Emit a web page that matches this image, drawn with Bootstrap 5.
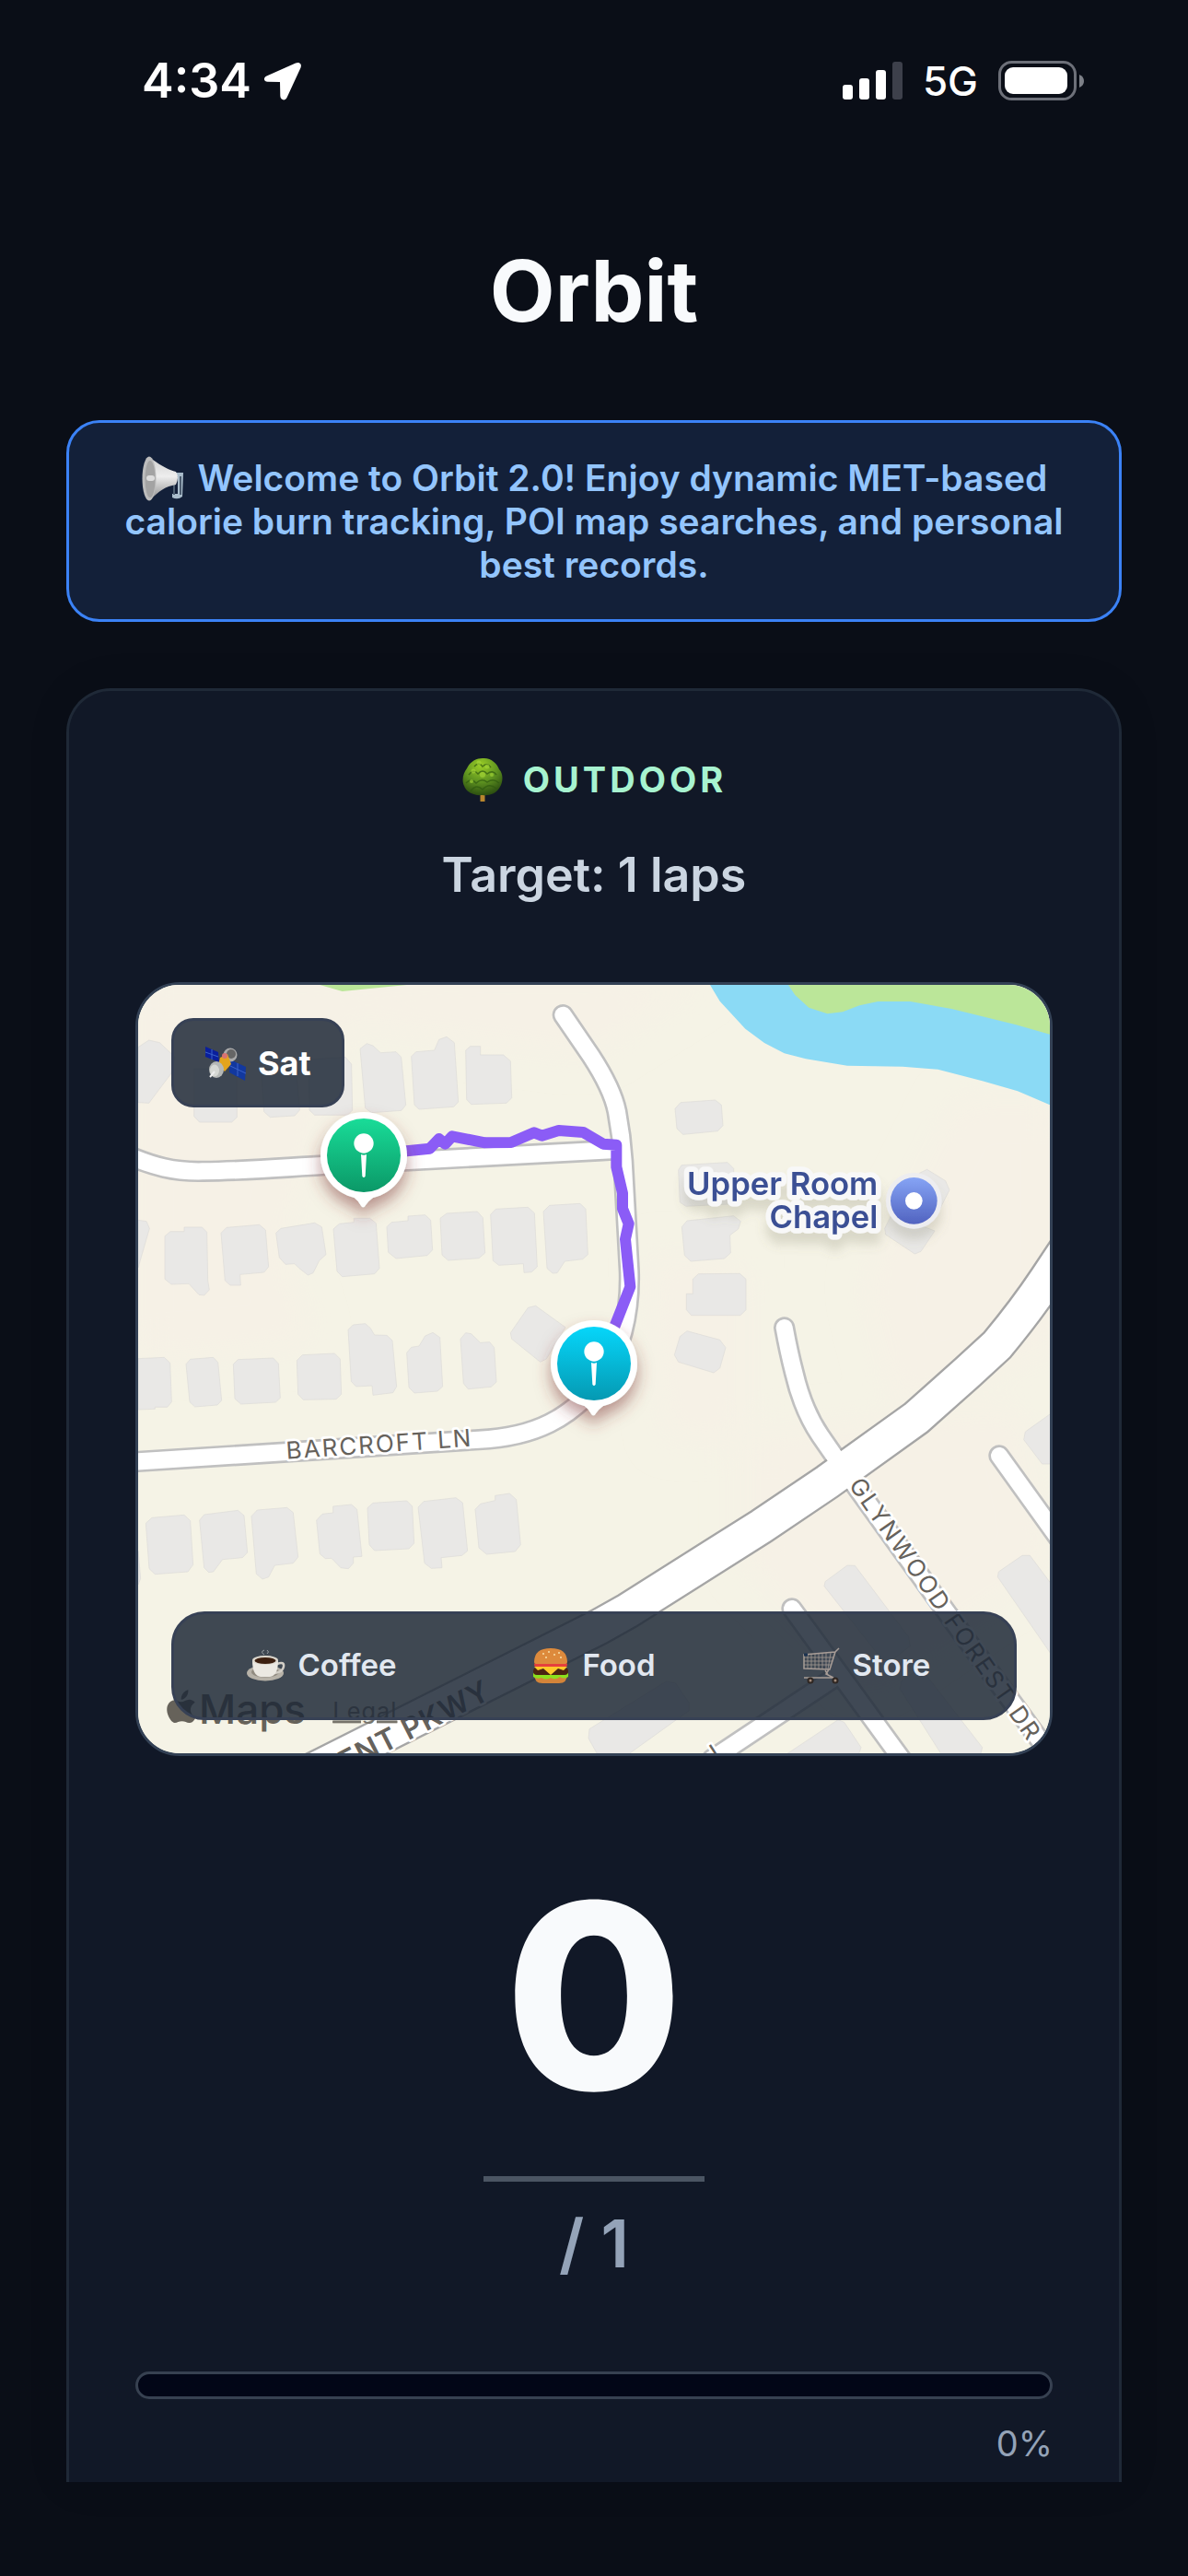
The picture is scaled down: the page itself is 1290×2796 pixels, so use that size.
<!DOCTYPE html>
<html lang="en">
<head>
<meta charset="utf-8">
<meta name="viewport" content="width=device-width, initial-scale=1">
<title>Orbit</title>
<link href="https://cdn.jsdelivr.net/npm/bootstrap@5.3.0/dist/css/bootstrap.min.css" rel="stylesheet">
<style>
  body { background: #0a0e17; color: #f8fafc; font-family: Inter, "Liberation Sans", sans-serif; }
  .status-bar { height: 176px; padding: 0 113px 0 154px; color: #fff; }
  .status-time { font-size: 52px; line-height: 64px; font-weight: 600; }
  .status-clock { gap: 12px; }
  .status-icons { gap: 22px; }
  .status-net { font-size: 44px; line-height: 64px; font-weight: 500; }
  .app-main { padding: 84px 72px 0; }
  .app-title { font-size: 92px; line-height: 112px; font-weight: 700; margin: 0 0 84px; }
  .notice { border: 3px solid #3b82f6; border-radius: 36px; background: #132039; color: #93c5fd; font-size: 39px; line-height: 47px; font-weight: 600; padding: 36px; margin-bottom: 72px; }
  .notice svg { vertical-align: -4px; margin: -8px 4px -8px 0; }
  .lap-card { border: 3px solid #1f2937; border-bottom: 0; border-radius: 48px 48px 0 0; background: #111827; padding: 72px 72px 0; box-shadow: 0 0 48px rgba(0,0,0,.08); }
  .mode { color: #a7f3d0; font-size: 38px; line-height: 48px; font-weight: 700; letter-spacing: 4px; gap: 21px; margin-bottom: 48px; }
  .target { color: #cbd5e1; font-size: 52px; line-height: 64px; font-weight: 600; margin-bottom: 84px; }
  .map-box { height: 840px; border: 3px solid #334155; border-radius: 48px; background: #f5f3e6; }
  .map-overlay { background: rgba(31,41,55,.85); border: 3px solid #374155; }
  .sat-btn { top: 36px; left: 36px; height: 97px; padding: 0 33px; border-radius: 24px; color: #fff; font-size: 36px; font-weight: 700; gap: 12px; }
  .poi-bar { left: 36px; right: 36px; bottom: 36px; height: 118px; border-radius: 36px; padding: 0 12px; }
  .poi-btn { flex: 1 1 0; height: 88px; border: 0; background: none; color: #e2e8f0; font-size: 33px; font-weight: 600; gap: 14px; padding: 0; }
  .lap-count { font-size: 280px; line-height: 282px; font-weight: 800; margin-top: 120px; }
  .lap-rule { width: 240px; height: 6px; background: #4b5563; opacity: 1; border: 0; margin: 54px auto 24px; }
  .lap-total { color: #94a3b8; font-size: 72px; line-height: 86px; font-weight: 600; margin-bottom: 96px; }
  .lap-progress { height: 30px; border: 3px solid #374151; border-radius: 15px; background: #020617; --bs-progress-bar-bg: #3b82f6; }
  .lap-percent { color: #94a3b8; font-size: 38px; line-height: 48px; margin-top: 24px; }
  .home-area { height: 102px; }
  .road-name { fill: #66625c; stroke: #fff; stroke-width: 16px; stroke-linejoin: round; paint-order: stroke; font-size: 78px; letter-spacing: 6px; }
  .parkway-name { font-size: 96px; font-weight: 600; letter-spacing: 3px; }
</style>
</head>
<body>
<div class="d-flex flex-column min-vh-100">

  <header class="status-bar d-flex align-items-center justify-content-between">
    <div class="status-clock d-flex align-items-center">
      <span class="status-time">4:34</span>
      <svg width="44" height="44" viewBox="0 0 44 44" aria-hidden="true"><path d="M36 2.500 4.500 16.500C.5 18.500 1.500 22.700 5.500 22.800L19 23 19.300 38C19.500 43 24.800 43.800 26.500 40L41.500 7.500C43.200 3.500 40 .8 36 2.500Z" fill="#fff"/></svg>
    </div>
    <div class="status-icons d-flex align-items-center">
      <svg width="65" height="42" viewBox="0 0 65 42" aria-hidden="true" fill="#fff"><rect y="25" width="11" height="16" rx="3"/><rect x="18" y="18" width="11" height="23" rx="3"/><rect x="36" y="9" width="11" height="32" rx="3"/><rect x="54" width="11" height="41" rx="3" fill="#3d404b"/></svg>
      <span class="status-net">5G</span>
      <svg width="93" height="44" viewBox="0 0 93 44" aria-hidden="true"><rect x="1.500" y="1.500" width="82" height="40" rx="13" fill="none" stroke="#6d7079" stroke-width="3"/><rect x="7" y="7" width="68" height="29" rx="9" fill="#fff"/><path d="M88 15Q93 17 93 22T88 29Z" fill="#7d8088"/></svg>
    </div>
  </header>

  <main class="app-main d-flex flex-column flex-grow-1">
    <h1 class="app-title text-center">Orbit</h1>

    <div class="notice text-center" role="status">
      <svg width="48" height="50" viewBox="0 0 48 50" aria-hidden="true">
        <defs><linearGradient id="horn" x1="0" y1="0" x2="0" y2="1"><stop offset="0" stop-color="#cfcfcf"/><stop offset=".45" stop-color="#eee"/><stop offset="1" stop-color="#8c8c8c"/></linearGradient></defs>
        <path d="M36 18 46 18 45 44Q40 48 34 45V41H40V22L36 24Z" fill="#a9bccb"/><path d="M36 24V42M43 22V42" stroke="#4c5d70" stroke-width="2"/>
        <path d="M9 1C16 6 26 14 38 17Q42 23 38 31C27 33 19 38 10 48Z" fill="url(#horn)"/>
        <ellipse cx="9" cy="24.500" rx="7.500" ry="24" fill="#bdbdbd"/><ellipse cx="10" cy="25" rx="5.500" ry="20" fill="#a3a3a3"/><rect x="6" y="21" width="9" height="6" rx="3" fill="#ddd"/>
      </svg>
      Welcome to Orbit 2.0! Enjoy dynamic MET-based calorie burn tracking, POI map searches, and personal best records.
    </div>

    <section class="lap-card flex-grow-1">
      <div class="mode d-flex justify-content-center align-items-center">
        <svg width="46" height="48" viewBox="0 0 46 48" aria-hidden="true">
          <defs><radialGradient id="leaf" cx=".45" cy=".2" r=".85"><stop offset="0" stop-color="#9bce27"/><stop offset=".5" stop-color="#5f9420"/><stop offset="1" stop-color="#26460f"/></radialGradient></defs>
          <rect x="20.500" y="38" width="5" height="10" fill="#b8862e"/>
          <path d="M23 1C32 0 39 7 41 13 46 18 45 27 42 32 38 40 29 42 23 41 15 42 5 38 3 31 0 25 2 17 6 12 9 5 16 1 23 1Z" fill="url(#leaf)"/>
          <g fill="none" stroke="#2f5a10" stroke-width="1.500" opacity=".7"><path d="M14 10q5-6 9 0q5-5 9 1M8 19q5-7 10-1q5-6 10 0q6-5 10 1M5 28q6-6 11 0q6-6 12-1q7-5 13 1M10 37q6-9 13-2q7-8 15-1"/></g>
          <g fill="#a6d838" opacity=".6"><circle cx="19" cy="6" r="2.500"/><circle cx="28" cy="10" r="2.500"/><circle cx="13" cy="15" r="2.500"/><circle cx="23" cy="19" r="3"/><circle cx="33" cy="19" r="2"/><circle cx="11" cy="26" r="2"/></g>
        </svg>
        <span>OUTDOOR</span>
      </div>
      <div class="target text-center">Target: 1 laps</div>

      <div class="map-box position-relative overflow-hidden">
        <svg class="position-absolute top-0 start-0 w-100 h-100" viewBox="30 27 2970 2502" preserveAspectRatio="xMidYMid slice" role="img" aria-label="Map of the walked route">
          <defs>
            <filter id="soft" x="-30%" y="-30%" width="160%" height="160%"><feGaussianBlur stdDeviation="60"/></filter>
            <filter id="pinShadow" x="-50%" y="-50%" width="200%" height="200%"><feDropShadow dx="0" dy="30" stdDeviation="26" flood-color="#7a3030" flood-opacity=".5"/></filter>
            <filter id="labelShadow" x="-20%" y="-30%" width="140%" height="180%"><feDropShadow dx="0" dy="36" stdDeviation="18" flood-color="#77745a" flood-opacity=".22"/></filter>
            <linearGradient id="pinGreen" x1="0" y1="0" x2="0" y2="1"><stop offset="0" stop-color="#19dc98"/><stop offset="1" stop-color="#0b9867"/></linearGradient>
            <linearGradient id="pinCyan" x1="0" y1="0" x2="0" y2="1"><stop offset="0" stop-color="#06d6fa"/><stop offset="1" stop-color="#0599b2"/></linearGradient>
            <linearGradient id="poi" x1="0" y1="0" x2="0" y2="1"><stop offset="0" stop-color="#86a4f5"/><stop offset="1" stop-color="#5163c0"/></linearGradient>
            <g id="pinShape" fill="#fff"><path d="M-60 122Q-25 135-12 160Q-2 178 8 160Q25 135 60 122Z"/><circle r="141"/></g>
            <g id="pinGlyph" fill="#fff"><circle cy="-39" r="32"/><path d="M-9-3Q0 2 9-3L5 68Q0 76-5 68Z"/></g>
            <g id="streets" fill="none" stroke-linecap="round" stroke-linejoin="round">
              <path d="M-20 575C80 620 150 636 240 634C400 632 500 622 640 614L1530 567L1600 563"/>
              <path d="M1414 125L1505 258Q1575 365 1590 440Q1605 520 1610 600L1630 960C1634 1100 1600 1230 1540 1310C1440 1440 1320 1500 1140 1508L0 1581"/>
              <path d="M2135 1143Q2150 1225 2167 1290Q2195 1410 2252 1495L2325 1600L2660 2065L3010 2545"/>
              <path d="M2835 1560L3040 1845"/>
              <path d="M2160 2058L2520 2552"/>
              <path d="M1900 2548L2315 2272"/>
            </g>
            <path id="parkway" d="M600 2585L1530 2118L1625 2065L2060 1790L2275 1645L2565 1437L2730 1290L2828 1200Q2920 1090 2990 985L3060 880" fill="none"/>
          </defs>
          <rect x="0" y="0" width="3030" height="2560" fill="#f5f3e6"/>
          <g fill="#f6f1e6" filter="url(#soft)"><path d="M0 0H1900L1500 250 700 150 500 900 600 1200 0 1250Z"/><path d="M2700 400H3050V1200L2500 1400 2400 1000Z"/><path d="M1700 900 2000 950 2000 1500 1750 1500Z"/><path d="M2000 1500 2900 1400 3000 1900 2400 2300 2000 1900Z"/></g>
          <path d="M622 27L695 48L905 27Z" fill="#bbe699"/>
          <path d="M2100 20H3010V200H2200Z" fill="#bbe699"/>
          <path d="M1893 27L1925 80L2008 170L2070 216L2135 250L2205 268L2340 290L2520 293L2635 302L2780 340L2895 373L3000 418V188L2890 157L2680 105L2545 81L2440 81L2380 94L2325 115L2275 121L2215 101L2170 60L2148 27Z" fill="#8bdaf5"/>
          <!-- houses -->
          <g fill="#e9e8e6" stroke="#dcdbd8" stroke-width="2" stroke-linejoin="round">
            <path d="M30 230L65 207L100 215L150 262L138 315L65 412L30 410Z"/>
            <path d="M212 300H352V458L335 474H230L212 455Z"/>
            <path d="M430 300H545L556 435L540 453L460 458L440 440Z"/>
            <path d="M585 270L705 262L725 285L728 435L712 451H605L588 435Z"/>
            <path d="M753 235L775 218L795 225L820 248L870 245L887 262L902 418L888 436L790 443L770 428Z"/>
            <path d="M920 260L935 245L995 240L1010 205L1035 196L1060 215L1073 408L1058 424L945 432L930 418Z"/>
            <path d="M1097 240L1112 227H1145V255H1220L1243 275L1247 395L1230 412L1115 416L1100 400Z"/>
            <path d="M30 793L57 797L67 820L30 948Z"/>
            <path d="M117 845L135 830H180V816H238L254 832L257 990L262 1020L245 1038L228 1036L195 1000L138 1002L117 985Z"/>
            <path d="M300 835L318 817L425 808L445 825L455 945L440 963L362 970L364 1005H330L313 990Z"/>
            <path d="M479 835L495 820L605 802L628 815L642 905L620 925L600 965L583 972L555 950L540 935L510 937L490 915Z"/>
            <path d="M666 822L685 805L733 800V787H785L805 803L816 950L800 968L695 977L678 960Z"/>
            <path d="M840 815L855 800L909 795V780L965 776L983 793L989 890L972 908L870 918L845 898Z"/>
            <path d="M1014 787L1035 771L1135 765L1153 785L1160 900L1140 917L1040 924L1020 907Z"/>
            <path d="M1178 775L1195 757L1300 751L1321 770L1330 945L1312 962L1287 964L1285 935L1205 940L1186 925Z"/>
            <path d="M1350 765L1370 745L1470 739L1488 757L1495 905L1478 920L1420 927L1395 965L1380 966L1362 950Z"/>
            <path d="M1325 1072L1422 1142L1360 1245L1340 1255L1247 1180L1243 1160L1300 1078Z"/>
            <path d="M30 1244L115 1240L134 1258L139 1385L125 1402H85V1408L30 1410Z"/>
            <path d="M186 1262L200 1246L275 1240L290 1256L302 1380L288 1395L215 1401L198 1385Z"/>
            <path d="M340 1262L355 1247L470 1242L487 1260L493 1372L478 1386L365 1392L345 1375Z"/>
            <path d="M547 1250L565 1232L670 1227L688 1245L692 1360L675 1376L568 1378L551 1360Z"/>
            <path d="M714 1150L730 1134L770 1130L787 1145L800 1167L840 1168L858 1185L872 1335L860 1355L795 1363L792 1332L740 1335L724 1318Z"/>
            <path d="M905 1225L920 1207L945 1203L965 1170L990 1159L1013 1175L1022 1335L1005 1350L930 1356L912 1338Z"/>
            <path d="M1080 1180L1097 1160L1115 1163L1145 1192L1175 1190L1190 1208L1197 1320L1180 1336L1105 1343L1090 1325Z"/>
            <path d="M30 1870L38 1960L30 1980Z"/>
            <path d="M55 1780L75 1762L180 1753L200 1772L209 1915L192 1938L85 1946L66 1928Z"/>
            <path d="M230 1770L245 1752L355 1738L375 1755L386 1875L370 1892L305 1898L275 1938L260 1940L245 1925Z"/>
            <path d="M399 1757L418 1737L515 1729L535 1745L551 1890L535 1910L475 1917L455 1955L435 1962L415 1945Z"/>
            <path d="M611 1770L630 1750L665 1746V1725L725 1719L743 1735L759 1888L731 1890V1910L715 1928L690 1925L660 1894L640 1895L622 1880Z"/>
            <path d="M777 1730L795 1714L905 1707L923 1725L929 1845L912 1863L800 1869L783 1850Z"/>
            <path d="M942 1728L960 1709L1065 1697L1087 1713L1103 1870L1085 1885L1017 1892L1020 1925L985 1927L963 1910Z"/>
            <path d="M1128 1735L1145 1717L1193 1706V1690L1240 1683L1262 1703L1276 1850L1258 1872L1165 1881L1140 1860Z"/>
            <path d="M1779 430L1797 410L1910 402L1930 418L1935 485L1918 503L1805 514L1785 495Z"/>
            <path d="M1790 630L1800 614L1950 605L1970 625V740L1815 748L1795 735Z"/>
            <path d="M1801 815L1818 795L1970 779L1993 797L1985 822L1958 842L1960 900L1940 918L1830 927L1810 908Z"/>
            <path d="M1837 985L1855 968L1990 967L2010 985V1085L1992 1103H1832L1816 1085V1033H1837Z"/>
            <path d="M1795 1172L1818 1154L1925 1183L1944 1208L1925 1275L1905 1290L1790 1255L1777 1232Z"/>
            <path d="M2575 640L2600 628L2660 665L2673 695L2640 760L2570 720Z"/>
            <path d="M2485 775L2625 828L2580 895L2560 903L2465 840L2462 820Z"/>
            <path d="M3010 1418L2920 1482L2915 1508L2975 1587H3010Z"/>
            <path d="M2265 1985L2268 1970L2340 1917L2365 1918L2540 2150L2545 2180L2480 2230L2450 2220Z"/>
            <path d="M2830 1955L2833 1938L2910 1885L2935 1885L3010 1985V2215Z"/>
            <path d="M1500 2450L1750 2295L1780 2300L1825 2365V2390L1630 2530H1525L1497 2480Z"/>
            <path d="M2145 2530L2310 2420L2330 2428L2385 2510L2378 2530Z"/>
            <path d="M2512 2320L2515 2295L2565 2260L2590 2265L2780 2510L2775 2530H2645Z"/>
          </g>
          <!-- roads: casings first, then surfaces, so that junctions stay open -->
          <use href="#streets" stroke="#c0c0c0" stroke-width="70"/>
          <use href="#parkway" stroke="#a5a5a5" stroke-width="124"/>
          <use href="#streets" stroke="#fff" stroke-width="54"/>
          <use href="#parkway" stroke="#fff" stroke-width="110"/>
          <!-- walked route -->
          <path d="M765 582L905 568L980 560L1010 528L1030 545L1053 520L1160 541L1245 540L1320 508L1345 518L1400 501L1480 507L1545 545L1588 548V620L1608 705V755L1628 805L1617 855L1633 1010L1570 1170" fill="none" stroke="#8b5cf6" stroke-width="36" stroke-linejoin="round"/>
          <!-- labels -->
          <text class="road-name" transform="translate(514 1571) rotate(-4)">BARCROFT LN</text>
          <text class="road-name" transform="translate(2343 1656) rotate(55)">GLYNWOOD FOREST DR</text>
          <text class="road-name" transform="translate(1915 2555) rotate(-33)">L</text>
          <text class="road-name parkway-name" transform="translate(1184 2348) rotate(-27)" text-anchor="end">ENT PKWY</text>
          <g filter="url(#labelShadow)" font-size="104" font-weight="600" text-anchor="end" fill="#3a4f94" stroke="#f8f8f8" stroke-width="34" stroke-linejoin="round" style="paint-order:stroke">
            <text x="2440" y="712">Upper Room</text><text x="2440" y="818">Chapel</text>
          </g>
          <g filter="url(#labelShadow)"><circle cx="2557" cy="730" r="91" fill="#ededf0"/><circle cx="2557" cy="730" r="76" fill="url(#poi)"/><circle cx="2557" cy="730" r="28" fill="#fff"/></g>
          <g fill="#66625a">
            <path d="M193 2322C195 2340 182 2355 170 2354C169 2340 180 2326 193 2322ZM170 2362C179 2362 186 2354 197 2354C205 2354 211 2358 215 2363C194 2377 197 2403 218 2411C211 2427 203 2430 196 2430C188 2430 183 2425 173 2425C162 2425 158 2430 149 2430C133 2427 109 2380 136 2360C150 2351 162 2362 170 2362Z"/>
            <text x="228" y="2432" font-size="132" font-weight="500">Maps</text>
            <a href="#legal" fill="#77746b"><text x="664" y="2417" font-size="76" letter-spacing="3" text-decoration="underline">Legal</text></a>
          </g>
          <g transform="translate(765 582)"><use href="#pinShape" filter="url(#pinShadow)"/><circle r="120" fill="url(#pinGreen)"/><use href="#pinGlyph"/></g>
          <g transform="translate(1515 1260)"><use href="#pinShape" filter="url(#pinShadow)"/><circle r="120" fill="url(#pinCyan)"/><use href="#pinGlyph"/></g>
        </svg>

        <button type="button" class="sat-btn map-overlay position-absolute d-flex align-items-center">
          <svg width="46" height="40" viewBox="0 0 46 40" aria-hidden="true">
            <path d="M1 2 15 8 16 19 1 13Z" fill="#0a1f9c"/><path d="M28 16 45 24 44 39 27 30Z" fill="#12389f"/><path d="M1 8 15 13M8 5V16M28 23 45 31M36 20V34" stroke="#3b62c9" stroke-width="1"/>
            <circle cx="28" cy="11" r="7.500" fill="#aaa"/><circle cx="29" cy="10" r="5" fill="#666"/>
            <path d="M17 14 25 10 29 21 22 29 15 22Z" fill="#e3a41d"/><circle cx="22" cy="12" r="3" fill="#d87272"/>
            <ellipse cx="13" cy="27" rx="8" ry="9" fill="#b5b8b6"/><ellipse cx="11" cy="28" rx="5" ry="6.500" fill="#d6d8d4"/><path d="M11 29 6 35" stroke="#eee" stroke-width="2"/>
          </svg>
          <span>Sat</span>
        </button>

        <div class="poi-bar map-overlay position-absolute d-flex align-items-center">
          <button type="button" class="poi-btn d-flex align-items-center justify-content-center">
            <svg width="42" height="36" viewBox="0 0 42 36" aria-hidden="true"><ellipse cx="20" cy="26" rx="20" ry="8.500" fill="#b7b2a8"/><ellipse cx="20" cy="25" rx="15" ry="5.500" fill="#918b80"/><path d="M33 16q8-3 7 3q-1 6-10 7" fill="none" stroke="#d2cec6" stroke-width="2.500"/><path d="M6 12H34Q34 29 25 30H15Q6 29 6 12Z" fill="#ece9e2"/><ellipse cx="20" cy="12" rx="14" ry="5" fill="#dcd7cd"/><ellipse cx="20" cy="12.500" rx="11.500" ry="3.500" fill="#3d2010"/><path d="M19 6q-5-3 0-5M22 5q3-2 0-4" fill="none" stroke="#9aa0a4" stroke-width="1"/></svg>
            <span>Coffee</span>
          </button>
          <button type="button" class="poi-btn d-flex align-items-center justify-content-center">
            <svg width="40" height="40" viewBox="0 0 40 40" aria-hidden="true"><path d="M2 29H38Q38 39 29 39H11Q2 39 2 29Z" fill="#d48439"/><path d="M1 28q5-3 9 0q5-3 10 0q5-3 10 0q5-3 9 0v4q-5 3-9 0q-5 4-10 1q-5 3-10 0q-5 2-9-1Z" fill="#8be01d"/><rect x="1" y="22" width="38" height="8" rx="4" fill="#4b2412"/><path d="M2 21H38L34 25 28 23 20 30 12 23 6 25Z" fill="#ffc82a"/><rect x="2" y="17" width="36" height="4" rx="2" fill="#e6403d"/><path d="M2 16Q2 1 20 1T38 16Q38 18 36 18H4Q2 18 2 16Z" fill="#dd8a3c"/><g fill="#f8dfa8"><circle cx="12" cy="7" r="1"/><circle cx="18" cy="5" r="1"/><circle cx="24" cy="8" r="1"/><circle cx="29" cy="6" r="1"/><circle cx="15" cy="11" r="1"/><circle cx="31" cy="11" r="1"/></g></svg>
            <span>Food</span>
          </button>
          <button type="button" class="poi-btn d-flex align-items-center justify-content-center">
            <svg width="40" height="40" viewBox="0 0 40 40" aria-hidden="true" fill="none" stroke="#a89d97"><path d="M39 1 35 5 29 24 1 23V8L35 5M28 24 25 29 33 33 1 33M24 25 27 30" stroke-width="1.500"/><path d="M1 11H33M1 15H32M1 19H31M5 8V23M9 7V23M13 7V23M17 7V23M21 6V24M25 6V24M30 6 27 24" stroke-width="1" opacity=".75"/><path d="M1 8H5" stroke="#1c3350" stroke-width="3"/><circle cx="8" cy="36" r="2.500" fill="#a08878" stroke="#2e2622" stroke-width="2"/><circle cx="35" cy="36" r="2.500" fill="#a08878" stroke="#2e2622" stroke-width="2"/></svg>
            <span>Store</span>
          </button>
        </div>
      </div>

      <div class="lap-count text-center">0</div>
      <hr class="lap-rule">
      <div class="lap-total text-center">/ 1</div>
      <div class="progress lap-progress" role="progressbar" aria-label="Lap progress" aria-valuenow="0" aria-valuemin="0" aria-valuemax="100"><div class="progress-bar" style="width:0%"></div></div>
      <div class="lap-percent text-end">0%</div>
    </section>
  </main>

  <div class="home-area"></div>
</div>
<script src="https://cdn.jsdelivr.net/npm/bootstrap@5.3.0/dist/js/bootstrap.bundle.min.js"></script>
</body>
</html>
